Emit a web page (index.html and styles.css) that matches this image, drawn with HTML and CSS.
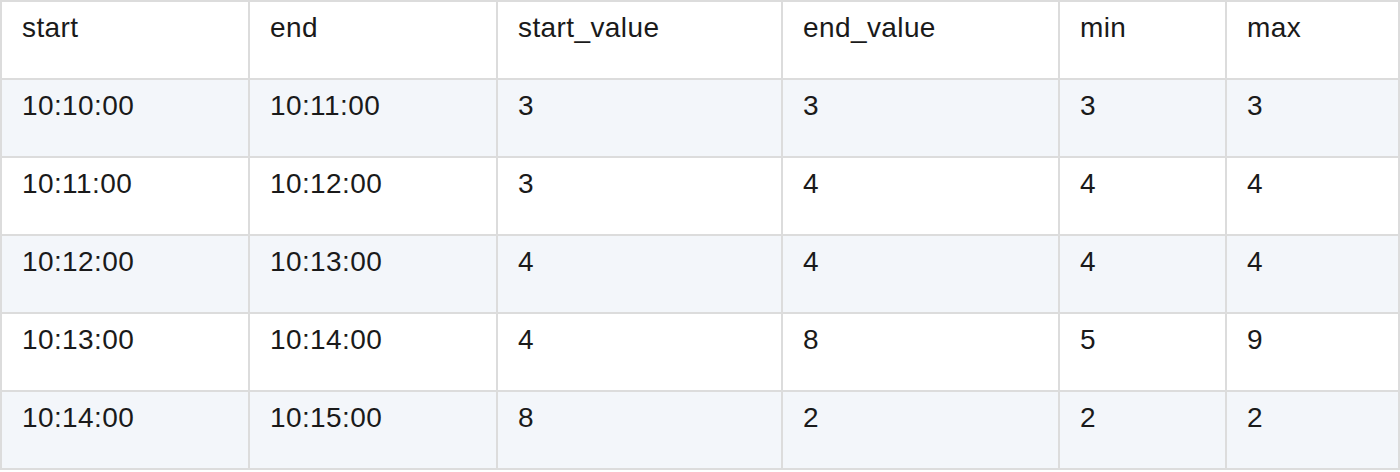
FILE: index.html
```html
<!DOCTYPE html>
<html>
<head>
<meta charset="utf-8">
<link rel="stylesheet" href="styles.css">
</head>
<body>
<table class="data">
  <colgroup>
    <col class="c1"><col class="c2"><col class="c3"><col class="c4"><col class="c5"><col class="c6">
  </colgroup>
  <thead>
    <tr><th>start</th><th>end</th><th>start_value</th><th>end_value</th><th>min</th><th>max</th></tr>
  </thead>
  <tbody>
    <tr class="alt"><td>10:10:00</td><td>10:11:00</td><td>3</td><td>3</td><td>3</td><td>3</td></tr>
    <tr><td>10:11:00</td><td>10:12:00</td><td>3</td><td>4</td><td>4</td><td>4</td></tr>
    <tr class="alt"><td>10:12:00</td><td>10:13:00</td><td>4</td><td>4</td><td>4</td><td>4</td></tr>
    <tr><td>10:13:00</td><td>10:14:00</td><td>4</td><td>8</td><td>5</td><td>9</td></tr>
    <tr class="alt"><td>10:14:00</td><td>10:15:00</td><td>8</td><td>2</td><td>2</td><td>2</td></tr>
  </tbody>
</table>
</body>
</html>
```

FILE: styles.css
```css
html, body {
  margin: 0;
  padding: 0;
  background: #ffffff;
}
.data {
  border-collapse: separate;
  border-spacing: 0;
  table-layout: fixed;
  width: 1400px;
  border-top: 2px solid #dcdcdc;
  border-left: 2px solid #dcdcdc;
  font-family: "Liberation Sans", Arial, Helvetica, sans-serif;
  font-size: 28px;
  letter-spacing: 0.4px;
  color: #1a1a1a;
}
.c1 { width: 248px; }
.c2 { width: 248px; }
.c3 { width: 285px; }
.c4 { width: 277px; }
.c5 { width: 167px; }
.c6 { width: 173px; }
.data th,
.data td {
  box-sizing: border-box;
  height: 78px;
  padding: 10px 19px 0 20px;
  border-right: 2px solid #dcdcdc;
  border-bottom: 2px solid #dcdcdc;
  text-align: left;
  vertical-align: top;
  font-weight: normal;
  line-height: 32px;
}
.data tr.alt td {
  background: #f3f6fa;
}
```
